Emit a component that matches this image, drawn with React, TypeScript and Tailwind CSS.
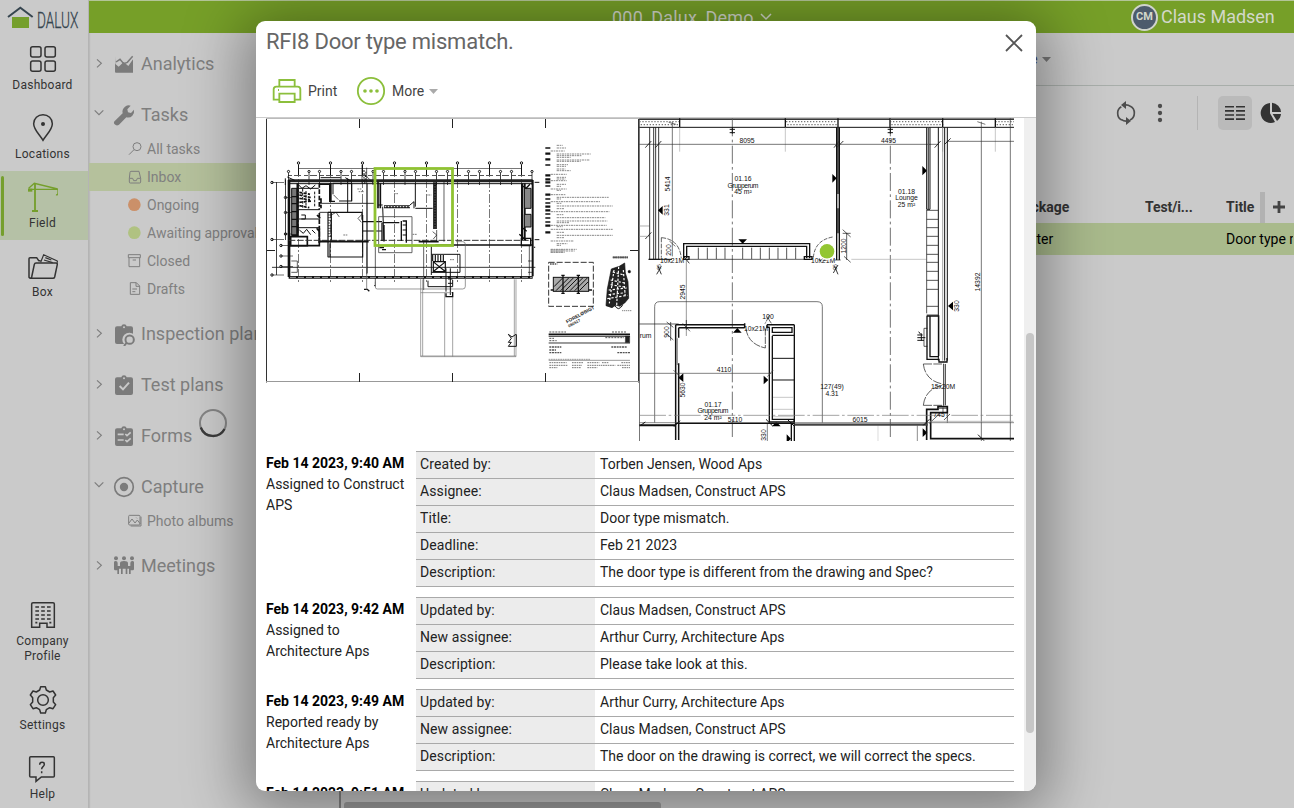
import React from "react";

type IconProps = { box: string; w: number; h: number; className?: string; children: React.ReactNode };

function Icon({ box, w, h, className = "", children }: IconProps) {
  return (
    <svg viewBox={box} width={w} height={h} fill="none" stroke="currentColor" className={"shrink-0 " + className}>
      {children}
    </svg>
  );
}

type NavItemProps = { label: string; icon: React.ReactNode; active?: boolean; tall?: boolean; gap?: string };

function NavItem({ label, icon, active = false, tall = false, gap = "mt-[4px]" }: NavItemProps) {
  return (
    <div className={(tall ? "h-[86px] " : "h-[69px] ") + "relative flex w-[88px] shrink-0 flex-col items-center pt-[11px] pr-[3px] " + (active ? "bg-[#b5c1a6]" : "")}>
      {active && <span className="absolute top-[5px] left-[1px] h-[60px] w-[3px] rounded bg-[#759f2c]" />}
      {icon}
      <span className={gap + " text-center text-[12px] leading-[15px] tracking-[0.25px] text-[#333]"}>{label}</span>
    </div>
  );
}

const dashboardIcon = (
  <Icon box="84 132 90 90" w={30} h={30} className="text-[#333]">
    <g strokeWidth="4.500">
      <rect x="92" y="140" width="31" height="31" rx="6" />
      <rect x="135" y="140" width="31" height="31" rx="6" />
      <rect x="92" y="183" width="31" height="31" rx="6" />
      <rect x="135" y="183" width="31" height="31" rx="6" />
    </g>
  </Icon>
);
const locationIcon = (
  <Icon box="84 339 90 90" w={30} h={30} className="text-[#333]">
    <path d="M129 421C119 404 101 389 101 371a28 27 0 0 1 56 0c0 18-18 33-28 50Z" strokeWidth="4.500" />
    <circle cx="129" cy="372" r="6" fill="currentColor" stroke="none" />
  </Icon>
);
const craneIcon = (
  <Icon box="84 546 90 90" w={30} h={30} className="text-[#759f2c]">
    <path d="M105 634V550M96 633h18" strokeWidth="5.500" />
    <path d="M84 568h90v10q0 8-6 6M86 565l17-15 70 17" strokeWidth="4" />
    <path d="M84 566h13v9H84Z" fill="currentColor" stroke="none" />
  </Icon>
);
const boxIcon = (
  <Icon box="84 33 90 90" w={30} h={30} className="text-[#333]">
    <path d="M91 115 87 112V56q0-3 3-3h20l6 9h6M91 115h68q4 0 5-4l8-38q0-4-4-4h-60q-4 0-5 4l-8 38q-1 4-4 4Z" strokeWidth="4.500" strokeLinejoin="round" />
    <path d="M122 67l9-23 41 19v5M132 60l26 8M136 53l18 7" strokeWidth="3.500" strokeLinejoin="round" />
  </Icon>
);
const companyIcon = (
  <Icon box="84 597 90 90" w={30} h={30} className="text-[#333]">
    <path d="M95 682V612q0-4 4-4h60q4 0 4 4v70h-22v-12h-22v12Z" strokeWidth="4.500" />
    <path d="M106 621h46M106 633h46M106 645h46M106 657h46" strokeWidth="5" strokeDasharray="11 6.5" />
    <path d="M106 668h6M148 668h6" strokeWidth="5" />
  </Icon>
);
const settingsIcon = (
  <Icon box="84 855 90 90" w={30} h={30} className="text-[#333]">
    <path d="M122 860h14l3 10 10 6 10-3 8 12-7 8v13l7 8-8 12-10-3-10 6-3 10h-14l-3-10-10-6-10 3-8-12 7-8v-13l-7-8 8-12 10 3 10-6Z" strokeWidth="4.500" strokeLinejoin="round" />
    <circle cx="129" cy="900" r="16" strokeWidth="4.500" />
  </Icon>
);
const helpIcon = (
  <Icon box="84 1065 90 90" w={30} h={30} className="text-[#333]">
    <path d="M92 1073h68q3 0 3 3v55q0 3-3 3h-36l-16 13v-13H92q-3 0-3-3v-55q0-3 3-3Z" strokeWidth="4.500" />
    <path d="M119 1097q0-7 7-7t7 6q0 4-4 7-4 3-4 8M125 1117v6" strokeWidth="4.500" />
  </Icon>
);

function Chevron({ open }: { open?: boolean }) {
  return (
    <Icon box="0 0 48 48" w={16} h={16} className="text-[#7d7d7d]">
      {open ? <path d="M11 10 24 23 37 10" strokeWidth="3.500" /> : <path d="M18 10 31 22 18 34" strokeWidth="3.500" />}
    </Icon>
  );
}

function Branch({ label, open, icon, children }: { label: string; open?: boolean; icon: React.ReactNode; children?: React.ReactNode }) {
  return (
    <div className="flex flex-col">
      <div className="flex h-10 items-center whitespace-nowrap pl-[2px]">
        <Chevron open={open} />
        <svg viewBox="0 0 72 72" width={24} height={24} fill="none" stroke="currentColor" className="mr-[5px] ml-[5px] shrink-0 text-[#7b7b7b]">
          {icon}
        </svg>
        <span className="pb-[2px] text-[18px] text-[#7e7e7e]">{label}</span>
      </div>
      {children}
    </div>
  );
}

function Leaf({ label, icon, active }: { label: string; icon: React.ReactNode; active?: boolean }) {
  return (
    <div className={"flex h-7 items-center whitespace-nowrap pl-[38px] " + (active ? "bg-[#b5c19c]" : "")}>
      <svg viewBox="0 0 48 48" width={16} height={16} fill="none" stroke="currentColor" strokeWidth="3" className="mr-1 shrink-0 text-[#7e7e7e]">
        {icon}
      </svg>
      <span className="text-[14px] text-[#808080]">{label}</span>
    </div>
  );
}

const clipboard = <path d="M15 13h13q1-6 8-6t8 6h13q6 0 6 6v41q0 6-6 6H15q-6 0-6-6V19q0-6 6-6Z" fill="currentColor" stroke="none" />;
const clipHole = <circle cx="36" cy="16" r="3" fill="#cacaca" stroke="none" />;

type Entry = { date: string; note: string; rows: [string, string][] };
const entries: Entry[] = [
  {
    date: "Feb 14 2023, 9:40 AM",
    note: "Assigned to Construct APS",
    rows: [
      ["Created by:", "Torben Jensen, Wood Aps"],
      ["Assignee:", "Claus Madsen, Construct APS"],
      ["Title:", "Door type mismatch."],
      ["Deadline:", "Feb 21 2023"],
      ["Description:", "The door type is different from the drawing and Spec?"],
    ],
  },
  {
    date: "Feb 14 2023, 9:42 AM",
    note: "Assigned to Architecture Aps",
    rows: [
      ["Updated by:", "Claus Madsen, Construct APS"],
      ["New assignee:", "Arthur Curry, Architecture Aps"],
      ["Description:", "Please take look at this."],
    ],
  },
  {
    date: "Feb 14 2023, 9:49 AM",
    note: "Reported ready by Architecture Aps",
    rows: [
      ["Updated by:", "Arthur Curry, Architecture Aps"],
      ["New assignee:", "Claus Madsen, Construct APS"],
      ["Description:", "The door on the drawing is correct, we will correct the specs."],
    ],
  },
  { date: "Feb 14 2023, 9:51 AM", note: "", rows: [["Updated by:", "Claus Madsen, Construct APS"]] },
];

function HistoryEntry({ date, note, rows }: Entry) {
  return (
    <div className="mb-[10px] flex">
      <div className="w-[150px] shrink-0 pt-[2px] text-[14px] leading-[21px] text-[#222]">
        <div className="whitespace-nowrap font-bold text-black">{date}</div>
        <div className="w-[142px]">{note}</div>
      </div>
      <div className="w-[598px] shrink-0 border-b border-[#a9a9a9]">
        {rows.map(([k, v]) => (
          <div key={k} className="flex h-[27px] border-t border-[#a9a9a9] text-[14px] leading-[25px] text-[#222]">
            <div className="w-[179px] shrink-0 bg-[#ececec] pl-[4px] tracking-[0.1px]">{k}</div>
            <div className="pl-[5px] whitespace-nowrap">{v}</div>
          </div>
        ))}
      </div>
    </div>
  );
}

const legend: [number, number, number][] = [
  [91, 350, 18], [99, 350, 30], [108, 332, 42], [117, 350, 102], [122, 350, 76], [127, 350, 42], [135, 350, 100], [139, 350, 72], [149, 350, 34],
  [154, 350, 30], [162, 350, 26], [167, 350, 42], [178, 332, 48], [187, 350, 30], [192, 350, 26], [197, 332, 48], [208, 350, 30], [214, 350, 14],
  [222, 332, 48], [226, 350, 14], [239, 332, 46], [247, 350, 156], [252, 350, 14], [260, 332, 148], [265, 350, 16], [273, 350, 168],
  [281, 350, 24], [290, 332, 176], [299, 350, 20], [308, 350, 146], [318, 350, 152], [323, 350, 38], [331, 332, 168], [335, 350, 18],
  [343, 332, 186], [352, 350, 22], [361, 350, 168], [368, 350, 22], [378, 332, 70], [386, 350, 32], [391, 350, 14], [403, 332, 78], [408, 332, 72], [412, 332, 42],
];

function OverviewPlan() {
  return (
    <svg viewBox="266 118 373 265" width={373} height={265} fill="none" stroke="#111" className="shrink-0">
      <path d="M266 118.5h373" stroke="#bbb" />
      <path d="M266.5 119v263.500M638.500 119v263.500" stroke="#333" />
      <path d="M266 381.500h373" stroke="#999" />
      <path d="M359.500 119v9M452.500 119v9M545.500 119v9M359.500 373v9M452.500 373v9M545.500 373v9M267 250.500h8M630 250.500h8" stroke="#222" />
      {/* grid axes */}
      <path d="M298.500 164v118M330.500 164v118M362.500 164v118M394.500 164v118M426.500 164v118M457.500 164v118M489.500 164v118M521.500 164v118" stroke="#555" strokeWidth=".8" strokeDasharray="9 2 2 2" />
      <path d="M298 168.500h224" stroke="#555" strokeWidth=".8" />
      <path d="M288 175.500h244" stroke="#555" strokeWidth="1" strokeDasharray="4 2 7 3" />
      <g strokeWidth="1">
        {[298.500, 330.500, 362.500, 394.500, 426.500, 457.500, 489.500, 521.500].map((x) => (
          <g key={x}>
            <circle cx={x} cy="163" r="1.200" />
            <path d={`M${x} 165v10`} />
          </g>
        ))}
        {[288.500, 309, 319.500, 341, 351.500, 373, 383.500, 405, 415.500, 436.500, 447.500, 468.500, 479.500, 500.500, 511.500, 532].map((x) => (
          <g key={x}>
            <circle cx={x} cy="171.500" r="1.100" />
            <path d={`M${x} 173v12`} strokeWidth=".8" />
          </g>
        ))}
        {[[272, 182.500], [285.500, 197.500], [285.500, 212.500], [285.500, 234], [272, 239.500], [281, 245.500], [281, 256], [281, 266.500], [272, 275]].map(([x, y]) => (
          <g key={`${x}-${y}`}>
            <circle cx={x} cy={y} r="1.200" />
            <path d={`M${x} ${y}h12`} strokeWidth=".6" />
          </g>
        ))}
      </g>
      <path d="M276.500 182v93M285.500 180v60" strokeWidth=".8" />
      <g transform="translate(262 115) scale(.33333)">
        <path d="M80 197H812" strokeWidth="9" stroke="#222" />
        <path d="M80 206H812" strokeWidth="3" />
        <path d="M70 190v20M76 186l22 10M176 188h60M250 188l20 12" strokeWidth="3" />
        <path d="M81 195V486" strokeWidth="8" />
        <path d="M89 220h16v140H89Z" fill="#777" strokeWidth="3" />
        <path d="M107 205V362M88 362h20" strokeWidth="7" />
        <path d="M89 245h16M89 266h16M89 290h16M89 313h16M89 335h16" strokeWidth="4" />
        <path d="M108 220h62M108 284h65M108 312h65M108 338h65M118 300h12v12h-12" strokeWidth="3" />
        <path d="M112 232l32 6M112 240l36 8M112 250l32 4M112 262l38-4M112 272l30 6" strokeWidth="5" strokeDasharray="9 4" />
        <path d="M108 222v58M122 222v58M132 228v50M158 230v44" strokeWidth="3" strokeDasharray="8 4" />
        <path d="M172 204v80M172 294v92M165 300l12 12M164 340l12 14M177 250v30" strokeWidth="5" strokeDasharray="14 5" />
        <path d="M110 210l10 10 12-8 14 10 14-12M112 345l12 10 10-12 12 16M150 345l10 10" strokeWidth="3" />
        <path d="M86 365h50v28H86ZM86 392h86V340M136 393v-28" strokeWidth="5" />
        <path d="M172 208h35M207 205v54h12M203 205v54h10" strokeWidth="4" />
        <path d="M213 238V205h56v53h-38M257 190v103M269 205v54" strokeWidth="3" />
        <path d="M300 150v56M314 158v320M320 190l14 15M306 175l14 16" strokeWidth="2" />
        <path d="M306 165v42M312 170l-4 38" strokeWidth="3" strokeDasharray="6 4" />
        <path d="M172 265h166M172 292h35M172 378h65" strokeWidth="2.500" />
        <path d="M198 292h10v87M198 292v135M204 385v42M208 292h92v22M302 300v126H198M302 348h58M302 320h58" strokeWidth="3.500" />
        <path d="M198 300h10M198 308h10M198 316h10M198 324h10M198 332h10M198 340h10M198 348h10M198 356h10M198 364h10" strokeWidth="2" />
        <path d="M208 300l14-8 10 14M300 298l-12 12 10 12M215 240l14 14" strokeWidth="2" />
        <path d="M290 230h16M286 222h12M244 360h14M396 236h14M492 240h16M452 358h12M564 434h12" strokeWidth="3" stroke="#777" strokeDasharray="5 2" />
        <path d="M80 376h730" strokeWidth="3" stroke="#333" strokeDasharray="20 5" />
        <path d="M170 380h150M470 380h60M520 390h290" strokeWidth="5" />
        <path d="M348 200v80M355 280V205" strokeWidth="5" />
        <path d="M366 275h78" strokeWidth="9" />
        <path d="M368 275h76" strokeWidth="4" stroke="#ddd" strokeDasharray="5 4" />
        <path d="M460 205v70M362 275l4 105M348 270h14M444 270l12-10v20M460 280h52" strokeWidth="3" />
        <path d="M362 323h50M360 323v55M422 318h11v65M418 318v60M366 330v46" strokeWidth="4" />
        <path d="M422 330h11M422 345h11M422 360h11" strokeWidth="3" />
        <path d="M350 305h100v108H350Z" strokeWidth="2.500" stroke="#444" />
        <path d="M522 202v140M516 202v140" strokeWidth="5" />
        <path d="M519 210v130" strokeWidth="5" strokeDasharray="3 5" />
        <path d="M512 350l12 10-10 12M524 345v35M546 200v180M485 380v145M316 205v270M340 395v120" strokeWidth="2" />
        <path d="M352 398h14M338 512v-2M360 404h12" strokeWidth="4" />
        <path d="M780 205v170M788 205v170M812 195V484" strokeWidth="6" />
        <path d="M787 220h20v60h-20ZM787 298h20v38h-20Z" fill="#888" strokeWidth="3" />
        <path d="M778 210l14 10 12-12M778 335l16 14M772 358l20 18M778 370h28v22h-28Z" strokeWidth="4" />
        <path d="M818 202h14M818 374h14M818 395v4" strokeWidth="3" />
        <path d="M80 487H812" strokeWidth="8" />
        <path d="M84 487H810" strokeWidth="2" stroke="#fff" strokeDasharray="18 6" />
        <path d="M30 457h790" strokeWidth="2.500" />
        <path d="M88 438h18v34H88M798 438h12M798 472h12M802 392v90" strokeWidth="2" />
        <path d="M508 390v90M508 418h86v54h-86" strokeWidth="3" />
        <path d="M514 440h36v30h-36ZM516 442l32 26M548 442l-32 26M512 420v18M520 420v18M528 420v18M536 420v18M544 420v18" strokeWidth="3.500" />
        <path d="M340 500v16q0 6 6 6h256q8 0 8-8V388q0-8-8-8h-20" stroke="#666" strokeWidth="2" />
        <path d="M498 497v18h74v-20M552 460v70M565 460v80M558 492h14M558 505h14" strokeWidth="3" />
      </g>
      <g transform="translate(262 240) scale(.33333)">
        <path d="M476 115v235h286V118M482 118v230M548 158v192M572 158v192M476 158h96M476 348h286M757 118v230" stroke="#777" strokeWidth="2" />
        <path d="M763 283v36h-24l9-12h-9l9-12-9-12 11 8 12-8" strokeWidth="3" />
        <path d="M552 160v10h20v-14M306 148h10l6 6" strokeWidth="4" />
        <path d="M314 20v130" strokeWidth="2" stroke="#555" />
        <path d="M860 67h134v132H860Z" stroke="#333" strokeWidth="3" strokeDasharray="18 6" />
        <path d="M864 72h22" stroke="#555" strokeWidth="4" strokeDasharray="5 2" />
        <rect x="874" y="112" width="106" height="42" fill="#aaa" strokeWidth="3" />
        <path d="M876 140l26-26M882 152l38-38M896 152l38-38M910 152l38-38M924 152l38-38M938 152l38-38M952 152l26-26" strokeWidth="3" />
        <path d="M903 104v58M949 104v58M898 106h10M944 106h10M866 150h8M980 150h10M898 160h10M944 160h10" strokeWidth="4" />
        <path d="M1048 87l24-8 16-10 2 30 8 26 2 50-12 14-14 10-12-4-12 8-18-6 4-50 8-40Z" fill="#222" strokeWidth="2" />
        <path d="M1052 96l30 8M1046 120l46 10M1040 150l54-6M1036 176l60-10M1070 80l-6 118M1056 90l-14 100M1084 90l6 84M1046 134l48 8M1040 164l50-6" stroke="#fff" strokeWidth="3.500" strokeDasharray="7 5" />
        <path d="M1058 196q6 10 12 10 6-2 12-10" strokeWidth="3" />
        <circle cx="1102" cy="95" r="4" fill="#111" />
        <path d="M1052 52h46" strokeWidth="5" strokeDasharray="5 2" stroke="#555" />
        <path d="M1080 212h28" strokeWidth="3" strokeDasharray="4 2" stroke="#888" />
        <path d="M860 283h244" strokeWidth="5" />
        <path d="M860 289h244M860 309h244" strokeWidth="2.500" />
        <path d="M1090 288h13v20h-13Z" fill="#222" />
        <path d="M862 276h50M1050 276h44M862 295h14M862 302h22M1030 293h56" strokeWidth="3" strokeDasharray="6 3" stroke="#555" />
        <path d="M862 321h36M1048 321h46M862 330h20M862 338h36M1066 338h38" strokeWidth="4" strokeDasharray="6 2" stroke="#555" />
        <path d="M860 361h244" stroke="#666" strokeWidth="2" />
        <path d="M862 368h52M930 368h34M976 368h36M1020 368h20M1078 368h26M862 376h54M930 376h30M976 376h38M1016 376h44M1066 376h38M862 383h24M930 383h28M976 383h30M1080 383h24" strokeWidth="3" strokeDasharray="5 2" stroke="#777" />
        <path d="M860 358h124M866 30h44M866 36h38" strokeWidth="2.500" strokeDasharray="5 2" stroke="#888" />
      </g>
      <g fontFamily="Liberation Sans, sans-serif" fontSize="4.800" fontWeight="700" fill="#222" stroke="none">
        <text x="567" y="323.500" transform="rotate(-28 567 323.500)">FORELØBIGT</text>
        <text x="569" y="327.500" fontSize="4" transform="rotate(-28 569 327.500)">090517</text>
      </g>
      <g transform="translate(440 115) scale(.33333)">
        {legend.map(([y, x, w]) => (
          <path key={y} d={`M${x} ${y}h${w}`} stroke="#777" strokeWidth="2.600" strokeDasharray="7 2 4 2" />
        ))}
        {[99, 116, 133, 150, 181, 193, 202, 213, 239, 252, 264, 275, 286, 297, 309, 321, 332, 352].map((y) => (
          <path key={y} d={`M316 ${y}h15`} strokeWidth={y % 3 ? 7 : 5} />
        ))}
        <path d="M520 427h44" stroke="#555" strokeWidth="5" strokeDasharray="5 2" />
      </g>
      <rect x="375" y="168.500" width="77.500" height="77" stroke="#8fc232" strokeWidth="2.800" />
    </svg>
  );
}

const planText = "Liberation Sans, sans-serif";

function DetailPlan() {
  return (
    <svg viewBox="639 118 375 323" width={375} height={323} fill="none" stroke="#111" className="shrink-0">
      <path d="M639.500 118v323" stroke="#777" />
      <path d="M639 118.500h375" stroke="#999" />
      <g transform="translate(638 115) scale(.33333)">
        {/* façade */}
        <path d="M4 13H1128M4 37H1128" strokeWidth="3" />
        <path d="M4 20h120M444 20h152M756 20h160M1072 20h56" stroke="#777" strokeWidth="4" strokeDasharray="4 5" />
        <path d="M8 29h116M448 29h148M760 29h156M1076 29h52" stroke="#777" strokeWidth="4" strokeDasharray="4 5" />
        <path d="M125 10v28M442 10v28M600 10v28M756 10v28M914 10v28M1072 10v28" strokeWidth="4" />
        <path d="M125 37v73M442 37v73M1072 37v73M914 37v73" strokeWidth="2" stroke="#aaa" />
        <path d="M283 10V975M757 10V975" stroke="#555" strokeWidth="2.500" strokeDasharray="54 10 8 10" />
        <path d="M275 43h16M275 53h16M283 36v20M749 43h16M749 53h16M757 36v20" strokeWidth="3" />
        {/* dimension lines */}
        <path d="M4 88h895M926 79h202" strokeWidth="2" stroke="#333" />
        <path d="M22 98l18-20M52 98l18-20M588 98l16-20M596 98l20-20M890 98l18-20M920 88l18-18M22 372l18-20" strokeWidth="2.500" />
        <path d="M103 20v404M92 22l22 6M94 378l18 16M1030 20v1000M1117 10v1000M1018 20l24 8" strokeWidth="2" stroke="#333" />
        <path d="M4 333h30M4 364h30" strokeWidth="2" stroke="#888" />
        <path d="M35 37v395M47 37v395M62 37v395M53 37v395" strokeWidth="2.500" />
        <path d="M32 433h70M32 433h34" strokeWidth="3" />
        <path d="M70 368v60M70 368q54 4 60 62" strokeWidth="2" strokeDasharray="14 4" />
        <path d="M137 430V386h378v44M146 430V394h360v36" strokeWidth="4" />
        <path d="M137 433h16v-8h-16ZM499 433h23v-8h-23Z" strokeWidth="4" />
        <path d="M152 433h350" strokeWidth="2" />
        <path d="M181 398v34M208 398v34M235 398v34M261 398v34M314 398v34M341 398v34M367 398v34M394 398v34M420 398v34M446 398v34M473 398v34" strokeWidth="2.500" stroke="#333" />
        <path d="M526 428q4-52 58-62M544 430v6h26" strokeWidth="2" strokeDasharray="12 4" />
        <path d="M145 433v230" strokeWidth="2" stroke="#666" />
        <path d="M56 478l14-24M60 454l10 24M586 474l14-24M590 454l10 24M138 425l16 20" strokeWidth="2.500" />
        <path d="M596 37v398M604 37v398" strokeWidth="4" />
        <path d="M600 37v200M600 280v75" strokeWidth="5" stroke="#333" />
        <path d="M626 355v80M614 355h24M614 344l24 22M618 424l20 18M590 435h18" strokeWidth="2" />
        <path d="M640 433h225" strokeWidth="2" stroke="#aaa" />
        {/* triangles */}
        <g fill="#000" stroke="none">
          <path d="M301 373h26l-13 13ZM74 273v26l-14-13ZM583 177v26l13-13ZM853 153v28l14-14ZM945 560v26l-15-13ZM285 653h26l-13-14Z" />
          <path d="M136 775v26l-15-13ZM377 782v26l14-13ZM402 934h26l-13-14ZM854 940v26l14-13ZM446 958v26l13-13Z" />
        </g>
        {/* right wall */}
        <path d="M866 37v246h10V37M901 37v700M920 37v700M928 37v700" strokeWidth="3" />
        <path d="M871 38v244" strokeWidth="4" stroke="#555" />
        <path d="M914 37v700" strokeWidth="2" stroke="#777" />
        <path d="M866 285v310M866 286h35M866 313h35M866 338h35M866 364h35M866 391h35M866 418h35M866 442h35M866 469h35M866 496h35M866 523h35M866 574h35M866 600h35" strokeWidth="2.500" stroke="#333" />
        <path d="M867 603v130h36v8h24v-12M876 603v122h27M866 603h36v120" strokeWidth="4" />
        <path d="M868 640h-10v54h10" strokeWidth="2" />
        <path d="M838 660h16M838 668h24M838 676h20M842 650l6 8M850 655v22" strokeWidth="3" />
        <path d="M856 747h62M856 871h62M856 747q6 50 58 60M856 871q6-50 58-60" strokeWidth="2" strokeDasharray="26 4" />
        <path d="M917 747v124M922 747v124" strokeWidth="2.500" />
        <path d="M866 975V883h34v-8h28v18h-50v78H1128" strokeWidth="5" />
        <path d="M903 880h24M915 878v16M928 893v30M874 925l32-30M918 915l18-18" strokeWidth="2" />
      </g>
      <g transform="translate(638 280) scale(.33333)">
        <path d="M50 428V80q0-15 15-15h472q16 0 16 15v348" strokeWidth="2" stroke="#333" />
        <path d="M4 132h118M98 126v56M86 126l20 16M86 162l20 18M145 120v30M134 130l22 24" strokeWidth="2" />
        <path d="M113 134h208M122 143h198M113 134v346M122 143v30M122 250v230M320 130v14M387 134h82M387 134v8h8" strokeWidth="4.500" />
        <path d="M117 175v80" stroke="#888" strokeWidth="5" />
        <path d="M394 142v284h74v-10M403 168v250h66M469 134v350M460 426v58M403 143h59v14h-59ZM403 166h66" strokeWidth="4" />
        <path d="M405 235h63M405 300h63" strokeWidth="3" />
        <path d="M405 352h63M405 388h63M405 410h63" strokeWidth="2" stroke="#aaa" />
        <path d="M324 146q6 46 58 58v-58M395 105l-14 26M400 130l-14-22" strokeWidth="2" strokeDasharray="22 3" />
        <path d="M4 280h396M106 270l22 22M388 290l18-20M388 430v60" strokeWidth="2" stroke="#444" />
        <path d="M4 406h1124" strokeWidth="2" stroke="#777" strokeDasharray="80 8 8 8" />
        <path d="M4 436h110" strokeWidth="6" />
        <path d="M4 428h1124M838 436v48" strokeWidth="2" stroke="#555" />
        <path d="M720 436v48" strokeWidth="2" stroke="#ccc" />
        <path d="M113 430h356" strokeWidth="4" />
        <path d="M469 434h400" strokeWidth="7" stroke="#444" />
        <path d="M108 440l18-18M384 418l20 20M450 420l20 20M856 436l18-18M1020 464l18 18M8 436l14-10" strokeWidth="3" />
        <path d="M876 424h250" strokeWidth="2" stroke="#999" />
      </g>
      <g fontFamily={planText} fontSize="6.800" fill="#111" stroke="none" textAnchor="middle">
        <text x="747" y="142.500">8095</text>
        <text x="888.500" y="142.500">4495</text>
        <text x="743" y="181">01.16</text>
        <text x="743" y="187.500" textLength="31">Grupperum</text>
        <text x="743" y="194">45 m²</text>
        <text x="906.500" y="193.500">01.18</text>
        <text x="906.500" y="200">Lounge</text>
        <text x="906.500" y="207">25 m²</text>
        <text x="713" y="407">01.17</text>
        <text x="713" y="413" textLength="31">Grupperum</text>
        <text x="713" y="420">24 m²</text>
        <text x="672" y="263">10x21M</text>
        <text x="823" y="263">10x21M</text>
        <text x="756" y="331">10x21M</text>
        <text x="724" y="371.500">4110</text>
        <text x="735" y="422">5110</text>
        <text x="860" y="422">6015</text>
        <text x="832" y="389">127(49)</text>
        <text x="832" y="395.500">4.31</text>
        <text x="943" y="389">15x20M</text>
        <text x="645.500" y="337.500">rum</text>
        <text x="768" y="318.500">100</text>
        <text x="939" y="417">745</text>
        <text transform="translate(670 184) rotate(-90)">5414</text>
        <text transform="translate(669 210) rotate(-90)">331</text>
        <text transform="translate(670.500 250) rotate(-90)">200</text>
        <text transform="translate(846 246) rotate(-90)">1200</text>
        <text transform="translate(684.500 292) rotate(-90)">2945</text>
        <text transform="translate(669 332) rotate(-90)">900</text>
        <text transform="translate(684.500 390) rotate(-90)">5630</text>
        <text transform="translate(765.500 435) rotate(-90)">330</text>
        <text transform="translate(959 306) rotate(-90)">330</text>
        <text transform="translate(980 282) rotate(-90)">14392</text>
        <text transform="translate(661 267) rotate(-90)" fontSize="5">95</text>
        <text transform="translate(837 267) rotate(-90)" fontSize="5">95</text>
      </g>
      <circle cx="827" cy="251" r="9" fill="#fff" stroke="none" />
      <circle cx="827" cy="251.300" r="7.300" fill="#93c632" stroke="none" />
    </svg>
  );
}

export default function App() {
  return (
    <div className="relative flex h-[808px] w-[1294px] overflow-hidden bg-[#cacaca] font-['Roboto',sans-serif]">
      <nav className="flex w-[89px] shrink-0 flex-col border-r border-[#b4b4b4] bg-[#cacaca] shadow-[1px_0_1px_rgba(0,0,0,0.08)]">
        <div className="h-[33px] shrink-0">
          <svg viewBox="0 0 264 99" width="88" height="33">
            <path d="M36 51h51v33H36Z" fill="#759f2c" />
            <path d="M24 51 61 23l37 28" fill="none" stroke="#36454f" strokeWidth="6" />
            <text x="111" y="83" fontSize="66" fontFamily="Roboto" fontWeight="300" fill="#36454f" stroke="#36454f" strokeWidth="1" textLength="124" lengthAdjust="spacingAndGlyphs">DALUX</text>
          </svg>
        </div>
        <NavItem label="Dashboard" icon={dashboardIcon} />
        <NavItem label="Locations" icon={locationIcon} />
        <NavItem label="Field" icon={craneIcon} active />
        <NavItem label="Box" icon={boxIcon} />
        <div className="grow" />
        <NavItem label="Company Profile" icon={companyIcon} tall gap="mt-[5px]" />
        <NavItem label="Settings" icon={settingsIcon} gap="mt-[3px]" />
        <NavItem label="Help" icon={helpIcon} gap="mt-[3px]" />
        <div className="-mb-[4px]" />
      </nav>

      <div className="flex min-w-0 grow flex-col">
        <header className="flex h-[33px] shrink-0 items-center border-t border-[#b3c597] bg-[#769f28] text-[#d3d8ca]">
          <div className="flex w-[1056px] items-center pl-[523px] text-[18px] tracking-[0.2px]">
            <span className="whitespace-nowrap">000_Dalux_Demo</span>
            <svg viewBox="0 0 12 12" width="12" height="12" className="ml-1.5" fill="none" stroke="currentColor" strokeWidth="1.500"><path d="m1 3 5 5 5-5" /></svg>
          </div>
          <span className="-ml-[14px] flex h-[27px] w-[27px] shrink-0 items-center justify-center rounded-full border-2 border-[#d0d4cc] bg-[#4d5b6c] text-[11px] font-bold">CM</span>
          <span className="ml-[3px] whitespace-nowrap pb-px text-[18px] tracking-[-0.02px]">Claus Madsen</span>
        </header>
        <div className="flex min-h-0 grow">
          <aside className="flex w-[250px] shrink-0 flex-col gap-[11px] overflow-hidden pt-[11px]">
            <Branch label="Analytics" icon={<><path d="M9 13v46q0 3 3 3h51V22L49 42 35 30 20 44 10 36Z" fill="currentColor" stroke="none" /><path d="M12 30l12-8 11 13 11-4L62 13" strokeWidth="4.500" /></>} />
            <Branch label="Tasks" open icon={<path d="M8 64q-5-6 1-11l23-22q-3-12 7-20 9-6 17-3L46 19l2 9 9 2 9-10q2 11-5 18-7 8-18 5L21 65q-7 5-13-1Z" fill="currentColor" stroke="none" />}>
              <Leaf label="All tasks" icon={<><circle cx="30" cy="17" r="12" /><path d="M21 26 6 41" /></>} />
              <Leaf label="Inbox" active icon={<path d="M12 7h24l5 21v11q0 3-3 3H10q-3 0-3-3V28l2-18q0-3 3-3ZM7 28h10l3 7h8l3-7h10" />} />
              <Leaf label="Ongoing" icon={<circle cx="22" cy="23" r="19" fill="#cb9069" stroke="none" />} />
              <Leaf label="Awaiting approval" icon={<circle cx="22" cy="23" r="19" fill="#b0c281" stroke="none" />} />
              <Leaf label="Closed" icon={<path d="M4 5h36v9H4ZM6 14v27h32V14M17 21h10" />} />
              <Leaf label="Drafts" icon={<path d="M10 5h18l10 10v25H10ZM27 5v11h11M16 24h14M16 32h9" />} />
            </Branch>
            <Branch label="Inspection plans" icon={<>{clipboard}{clipHole}<circle cx="52" cy="53" r="21" fill="#cacaca" stroke="none" /><circle cx="53" cy="53" r="12.500" strokeWidth="6" /><path d="M44 62l-8 10" strokeWidth="6" /></>} />
            <Branch label="Test plans" icon={<>{clipboard}{clipHole}<path d="M23 39l10 10 18-20" stroke="#cacaca" strokeWidth="6" /></>} />
            <Branch label="Forms" icon={<>{clipboard}{clipHole}<path d="M17 31h18M17 48h18M40 30l5 5 11-10M40 48l5 5 11-10" stroke="#cacaca" strokeWidth="5" /></>} />
            <Branch label="Capture" open icon={<><circle cx="36" cy="36" r="28" strokeWidth="5" /><circle cx="36" cy="36" r="12.500" fill="currentColor" stroke="none" /></>}>
              <Leaf label="Photo albums" icon={<><rect x="5" y="7" width="34" height="29" rx="3" /><path d="M42 11v28H11M6 30l9-12 9 12 7-9 9 12M28 14l2 2" /></>} />
            </Branch>
            <Branch label="Meetings" icon={<g fill="currentColor" stroke="none"><circle cx="12" cy="13" r="6" /><circle cx="36" cy="13" r="6" /><circle cx="60" cy="13" r="6" /><path d="M6 25q0-4 5-4 6 0 6 6v9h7v-8q0-7 12-7t12 7v8h7v-9q0-6 6-6 5 0 5 4v20q0 4-4 4h-6v11h-5V44h-5v16h-5V44H32v16h-5V44h-6v16h-5V49h-6q-4 0-4-4Z" /></g>} />
          </aside>
          <main className="flex min-w-0 grow flex-col border-l-2 border-[#858585] text-[#333]">
            <div className="flex h-[53px] shrink-0 items-center border-b border-[#a8aeaa] pl-[689px]">
              <span className="w-[8px] text-[14px] font-medium text-[#446]">e</span>
              <svg viewBox="0 0 9 5" width="9" height="5" className="ml-[4px]"><path d="M0 0h9L4.500 5Z" fill="#777" /></svg>
            </div>
            <div className="flex h-[105px] shrink-0 items-start pt-[10px] pl-[773px]">
              <Icon box="342 288 72 102" w={24} h={34} className="text-[#4d4d4d]">
                <path d="M365 360q-12-5-12-21 0-13 11-19M391 319q12 6 12 20 0 15-13 21M372 315q12-2 19 4M384 363q-12 2-19-4" strokeWidth="5" />
                <path d="M363 315l15-12v24ZM393 363l-15 12v-24Z" fill="currentColor" stroke="none" />
              </Icon>
              <Icon box="0 0 30 102" w={10} h={34} className="ml-[17px] text-[#4d4d4d]">
                <g fill="currentColor" stroke="none"><circle cx="15" cy="30" r="6.500" /><circle cx="15" cy="51" r="6.500" /><circle cx="15" cy="72" r="6.500" /></g>
              </Icon>
              <span className="ml-[32px] h-[34px] w-px bg-[#b4b4b4]" />
              <span className="ml-[20px] flex h-[34px] w-[34px] items-center justify-center rounded-[5px] bg-[#bababa]">
                <Icon box="0 0 60 42" w={20} h={14} className="text-[#333]">
                  <path d="M0 2h27M0 14.500h27M0 27h27M0 39.500h27M33 2h27M33 14.500h27M33 27h27M33 39.500h27" strokeWidth="5" />
                </Icon>
              </span>
              <Icon box="777 288 72 102" w={24} h={34} className="ml-[7px] text-[#333]">
                <path d="M810 309v31l15 26a30 30 0 1 1-15-57Z" fill="currentColor" stroke="none" />
                <path d="M816 308a30 30 0 0 1 27 28h-27ZM818 342h25a30 30 0 0 1-12 21Z" fill="currentColor" stroke="none" />
              </Icon>
            </div>
            <div className="flex h-[32px] shrink-0 items-center text-[14px] font-bold">
              <span className="ml-[674px] w-[116px] shrink-0 whitespace-nowrap">Package</span>
              <span className="ml-[14px] w-[81px] shrink-0 tracking-[-0.1px]">Test/i...</span>
              <span className="w-[34px] shrink-0">Title</span>
              <span className="h-[31px] w-[5px] shrink-0 bg-[#b2b2b2]" />
              <svg viewBox="0 0 12 12" width="12" height="12" className="ml-[8px] shrink-0" stroke="#444" strokeWidth="2.800"><path d="M6 0v12M0 6h12" /></svg>
            </div>
            <div className="flex h-[32px] shrink-0 items-center overflow-hidden bg-[#a9ba8c] text-[14px] whitespace-nowrap text-black">
              <span className="ml-[651px] w-[234px] shrink-0">Carpenter</span>
              <span className="w-[67px] shrink-0 overflow-hidden">Door type mismatch</span>
            </div>
            <div className="grow" />
            <div className="ml-[3px] h-[6px] w-[317px] rounded-t-[3px] bg-[#9c9c9c]" />
          </main>
        </div>
      </div>

      <svg viewBox="0 0 30 30" width="30" height="30" fill="none" className="absolute top-[408px] left-[198px]">
        <circle cx="15" cy="15" r="13" stroke="#858585" strokeWidth="2" />
        <path d="M2.800 19.500A13 13 0 0 0 26.500 21" stroke="#3c3c3c" strokeWidth="2.300" />
      </svg>

      <section className="absolute top-[21px] left-[256px] flex h-[770px] w-[780px] flex-col overflow-hidden rounded-[9px] bg-white shadow-[0_9px_60px_12px_rgba(0,0,0,0.38)]">
        <div className="flex h-[41px] shrink-0 items-center justify-between pr-[13px] pl-[10px]">
          <h1 className="text-[22px] leading-[41px] tracking-[-0.22px] text-[#666]">RFI8 Door type mismatch.</h1>
          <svg viewBox="0 0 18 18" width="18" height="18" stroke="#555" strokeWidth="1.800" className="mt-[3px]"><path d="m1 1 16 16M17 1 1 17" /></svg>
        </div>
        <div className="flex h-[56px] shrink-0 items-center border-b border-[#ccc] pl-4 text-[14px] text-[#444]">
          <div className="flex items-center pt-[3px]">
            <Icon box="48 228 90 90" w={30} h={30} className="text-[#8cbf3c]">
              <path d="M70 258v-18h46v18M70 299H53v-31q0-8 8-8h64q8 0 8 8v31h-17M70 281h46v25H70ZM66 270h3" strokeWidth="5.500" />
            </Icon>
            <span className="ml-[6px] w-[48px]">Print</span>
            <Icon box="300 228 90 90" w={30} h={30} className="text-[#8cbf3c]">
              <circle cx="345" cy="273" r="39.500" strokeWidth="5.500" />
              <g fill="currentColor" stroke="none"><circle cx="327" cy="273" r="5.500" /><circle cx="345" cy="273" r="5.500" /><circle cx="363" cy="273" r="5.500" /></g>
            </Icon>
            <span className="ml-[6px] w-[37px]">More</span>
            <svg viewBox="0 0 9 5" width="9" height="5"><path d="M0 0h9L4.500 5Z" fill="#aaa" /></svg>
          </div>
        </div>
        <div className="flex min-h-0 grow">
          <div className="flex w-[768px] shrink-0 flex-col overflow-hidden pl-[10px]">
            <div className="flex h-[333px] shrink-0 items-start">
              <OverviewPlan />
              <DetailPlan />
            </div>
            {entries.map((e) => (
              <HistoryEntry key={e.date} {...e} />
            ))}
          </div>
          <div className="w-[12px] shrink-0 bg-[#efefef] pt-[215px] pl-[2px]">
            <div className="h-[400px] w-[8px] rounded-full bg-[#c6c6c6]" />
          </div>
        </div>
      </section>
    </div>
  );
}
